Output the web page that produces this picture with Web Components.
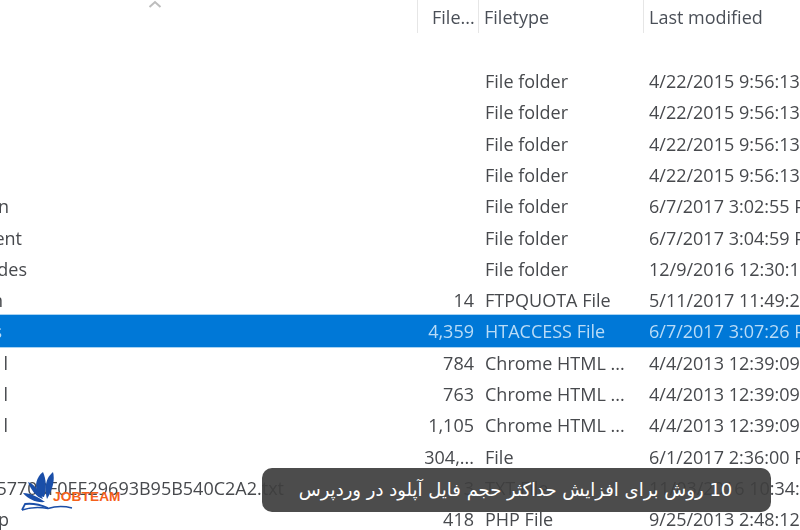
<!DOCTYPE html>
<html>
<head>
<meta charset="utf-8">
<style>
  html, body { margin: 0; padding: 0; background: #fff; }
  body { width: 800px; height: 530px; overflow: hidden; position: relative; font-family: "Open Sans", "Noto Sans", sans-serif; }
</style>
</head>
<body>
<file-list></file-list>
<job-logo></job-logo>
<toast-bar>10 روش برای افزایش حداکثر حجم فایل آپلود در وردپرس</toast-bar>

<script>
const COLS = '417px 61px 165px 157px';

const ROWS = [
  ['', 0, '', 'File folder', '4/22/2015 9:56:13 PM'],
  ['', 0, '', 'File folder', '4/22/2015 9:56:13 PM'],
  ['', 0, '', 'File folder', '4/22/2015 9:56:13 PM'],
  ['', 0, '', 'File folder', '4/22/2015 9:56:13 PM'],
  ['n', 9, '', 'File folder', '6/7/2017 3:02:55 PM'],
  ['ent', 22, '', 'File folder', '6/7/2017 3:04:59 PM'],
  ['des', 27, '', 'File folder', '12/9/2016 12:30:11 PM'],
  ['n', 3, '14', 'FTPQUOTA File', '5/11/2017 11:49:22 AM'],
  ['s', 2, '4,359', 'HTACCESS File', '6/7/2017 3:07:26 PM', true],
  ['l', 8, '784', 'Chrome HTML ...', '4/4/2013 12:39:09 PM'],
  ['l', 8, '763', 'Chrome HTML ...', '4/4/2013 12:39:09 PM'],
  ['l', 8, '1,105', 'Chrome HTML ...', '4/4/2013 12:39:09 PM'],
  ['', 0, '304,...', 'File', '6/1/2017 2:36:00 PM'],
  ['557700F0EE29693B95B540C2A2.txt', 284, '3', 'TXT File', '11/03/2016 10:34:12 AM'],
  ['p', 9, '418', 'PHP File', '9/25/2013 2:48:12 PM'],
];

class ListHeader extends HTMLElement {
  constructor() {
    super();
    this.attachShadow({ mode: 'open' });
  }

  connectedCallback() {
    this.shadowRoot.innerHTML = `
      <style>
        :host {
          display: grid;
          grid-template-columns: ${COLS};
          height: 33px;
          color: #4a4f57;
          font-size: 18px;
          line-height: 34px;
        }
        .col {
          border-left: 1px solid #e6e6e6;
          padding-left: 5px;
          white-space: nowrap;
          overflow: hidden;
        }
        .name {
          border-left: 0;
          padding: 0;
          display: flex;
          justify-content: center;
        }
        .size { padding-left: 14px; }
        svg { margin: 0 0 0 -107px; display: block; }
      </style>
      <div class="col name">
        <svg width="14" height="8" viewBox="0 0 14 8"><path d="M1.5 7 L7 2 L12.5 7" fill="none" stroke="#bdbdbd" stroke-width="2"/></svg>
      </div>
      <div class="col size">File...</div>
      <div class="col">Filetype</div>
      <div class="col">Last modified</div>
    `;
  }
}

class FileRow extends HTMLElement {
  constructor() {
    super();
    this.attachShadow({ mode: 'open' });
  }

  set data(r) {
    const [name, end, size, type, date, selected] = r;
    this.shadowRoot.innerHTML = `
      <style>
        :host {
          display: grid;
          grid-template-columns: ${COLS};
          height: 31.3px;
          padding-top: 1px;
          box-sizing: border-box;
          line-height: 31.3px;
          white-space: nowrap;
          color: #47494d;
          font-size: 18px;
        }
        :host([selected]) {
          background: #0078d7;
          color: #b9dcf7;
          box-shadow: 0 -1px 0 #a9d3f2, 0 1px 0 #a9d3f2;
        }
        .name { overflow: hidden; }
        .name span { display: flex; justify-content: flex-end; width: ${end}px; }
        .size { text-align: right; padding-right: 4px; }
        .type { padding-left: 7px; overflow: hidden; }
        .date { padding-left: 6px; overflow: visible; }
      </style>
      <div class="name"><span>${name}</span></div>
      <div class="size">${size}</div>
      <div class="type">${type}</div>
      <div class="date">${date}</div>
    `;
    if (selected) this.setAttribute('selected', '');
  }
}

class FileList extends HTMLElement {
  constructor() {
    super();
    this.attachShadow({ mode: 'open' });
  }

  connectedCallback() {
    this.shadowRoot.innerHTML = `
      <style>
        :host {
          display: block;
          width: 800px;
          height: 530px;
          overflow: hidden;
          filter: blur(0.55px);
        }
        .rows { padding-top: 32.05px; }
      </style>
      <list-header></list-header>
      <div class="rows"></div>
    `;
    const box = this.shadowRoot.querySelector('.rows');
    ROWS.forEach(r => {
      const row = document.createElement('file-row');
      box.appendChild(row);
      row.data = r;
    });
  }
}

class JobLogo extends HTMLElement {
  constructor() {
    super();
    this.attachShadow({ mode: 'open' });
  }

  connectedCallback() {
    this.shadowRoot.innerHTML = `
      <style>
        :host {
          position: absolute;
          left: 20px;
          top: 470px;
          width: 104px;
          height: 45px;
          display: block;
        }
        svg { position: absolute; left: 0; top: 0; }
        span {
          position: absolute;
          left: 33px;
          top: 18px;
          color: #f4601a;
          font: bold 13.7px/18px "Liberation Sans", sans-serif;
          letter-spacing: 0.1px;
        }
      </style>
      <svg width="60" height="45" viewBox="0 0 60 45">
        <g fill="#1a4ea8">
          <path d="M23 2 C26 9 27 18 24 27 C20 27 17 22 16 16 C16 10 19 5 23 2Z"/>
          <path d="M33 2 C35 9 33 19 27 29 C25 22 25 14 28 8 C29 6 31 4 33 2Z"/>
          <path d="M8 12 C14 14 19 20 23 29 C16 27 11 20 8 12Z"/>
          <path d="M3 23 C11 23 18 27 25 32 C16 33 8 29 3 23Z"/>
        </g>
        <g fill="none" stroke="#1a4ea8">
          <path d="M2 40 L5 34 C13 33 21 35 28 38" stroke-width="1.8"/>
          <path d="M2 40 C11 37 20 37 28 38.5 C36 36 44 36 52 38" stroke-width="1.5"/>
        </g>
      </svg>
      <span>JOBTEAM</span>
    `;
  }
}

class ToastBar extends HTMLElement {
  constructor() {
    super();
    this.attachShadow({ mode: 'open' });
  }

  connectedCallback() {
    this.shadowRoot.innerHTML = `
      <style>
        :host {
          position: absolute;
          left: 262px;
          top: 468px;
          width: 509px;
          height: 44px;
          box-sizing: border-box;
          display: flex;
          align-items: center;
          justify-content: center;
          padding: 0 38px 0 36px;
          background: rgba(62, 62, 62, 0.93);
          border-radius: 10px;
          color: #fff;
          font: 18px/44px "DejaVu Sans", "Noto Sans", sans-serif;
          direction: rtl;
          white-space: nowrap;
        }
      </style>
      <slot></slot>
    `;
  }
}

customElements.define('list-header', ListHeader);
customElements.define('file-row', FileRow);
customElements.define('file-list', FileList);
customElements.define('job-logo', JobLogo);
customElements.define('toast-bar', ToastBar);
</script>
</body>
</html>
